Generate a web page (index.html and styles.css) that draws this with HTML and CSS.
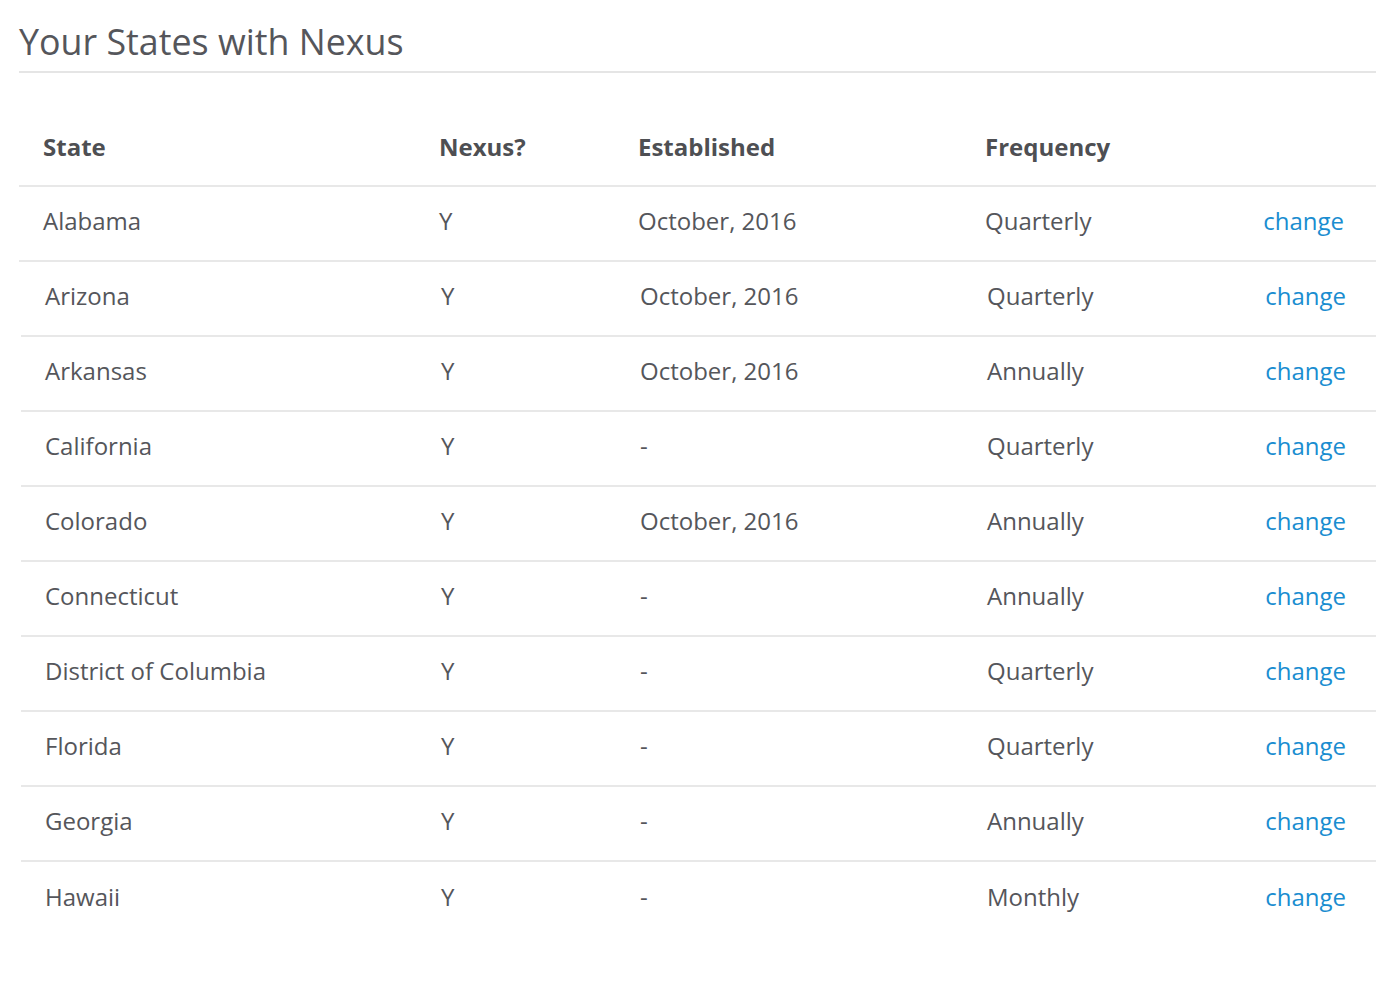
FILE: index.html
```html
<!DOCTYPE html>
<html lang="en">
<head>
<meta charset="utf-8">
<title>Your States with Nexus</title>
<link rel="stylesheet" href="styles.css">
</head>
<body>
<div class="page">
  <h1 class="title">Your States with Nexus</h1>
  <div class="nexus-table">
    <div class="row head">
      <div>State</div><div>Nexus?</div><div>Established</div><div>Frequency</div><div></div>
    </div>
    <div class="row">
      <div>Alabama</div><div>Y</div><div>October, 2016</div><div>Quarterly</div><a class="change" href="#">change</a>
    </div>
    <div class="row shift">
      <div>Arizona</div><div>Y</div><div>October, 2016</div><div>Quarterly</div><a class="change" href="#">change</a>
    </div>
    <div class="row shift">
      <div>Arkansas</div><div>Y</div><div>October, 2016</div><div>Annually</div><a class="change" href="#">change</a>
    </div>
    <div class="row shift">
      <div>California</div><div>Y</div><div>-</div><div>Quarterly</div><a class="change" href="#">change</a>
    </div>
    <div class="row shift">
      <div>Colorado</div><div>Y</div><div>October, 2016</div><div>Annually</div><a class="change" href="#">change</a>
    </div>
    <div class="row shift">
      <div>Connecticut</div><div>Y</div><div>-</div><div>Annually</div><a class="change" href="#">change</a>
    </div>
    <div class="row shift">
      <div>District of Columbia</div><div>Y</div><div>-</div><div>Quarterly</div><a class="change" href="#">change</a>
    </div>
    <div class="row shift">
      <div>Florida</div><div>Y</div><div>-</div><div>Quarterly</div><a class="change" href="#">change</a>
    </div>
    <div class="row shift">
      <div>Georgia</div><div>Y</div><div>-</div><div>Annually</div><a class="change" href="#">change</a>
    </div>
    <div class="row shift last">
      <div>Hawaii</div><div>Y</div><div>-</div><div>Monthly</div><a class="change" href="#">change</a>
    </div>
  </div>
</div>
</body>
</html>
```

FILE: styles.css
```css
html, body {
  margin: 0;
  padding: 0;
  background: #ffffff;
}

body {
  font-family: "Open Sans", "Liberation Sans", sans-serif;
  color: #55565b;
}

.page {
  padding-left: 19px;
}

.title {
  margin: 0;
  padding: 17px 0 5px 0;
  font-size: 35.8px;
  line-height: 49px;
  font-weight: 400;
  color: #55565b;
  border-bottom: 2px solid #e5e5e5;
}

.nexus-table {
  margin-top: 38px;
}

.row {
  display: grid;
  grid-template-columns: 396px 199px 347px 1fr auto;
  align-items: center;
  height: 75px;
  padding: 0 32px 6px 24px;
  box-sizing: border-box;
  border-bottom: 2px solid #e8e8e8;
  font-size: 24px;
  line-height: 33px;
  color: #55565b;
}

.row.head {
  height: 76px;
  padding-bottom: 4px;
  font-weight: 700;
  color: #4e4f53;
}

.row.shift {
  margin-left: 2px;
  padding-right: 30px;
}

.row.last {
  border-bottom: none;
}

.change {
  color: #1a8dd0;
  text-decoration: none;
}
```
